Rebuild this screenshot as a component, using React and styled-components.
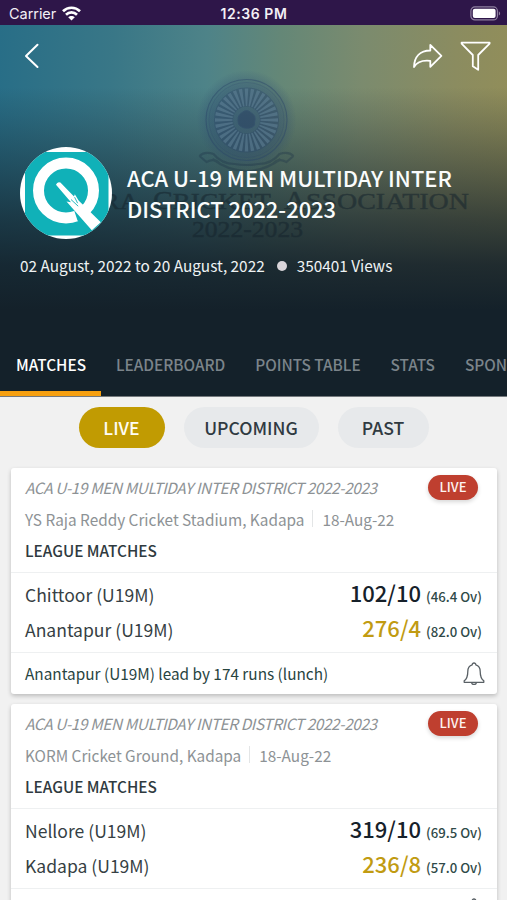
import React from "react";
import styled, { createGlobalStyle, css } from "styled-components";

const Global = createGlobalStyle`
  *, *::before, *::after { box-sizing: border-box; }
  html, body { margin: 0; padding: 0; overflow: hidden; }
  body { background: #f1f1f1; }
`;

const Screen = styled.div`
  width: 507px;
  height: 900px;
  overflow: hidden;
  display: flex;
  flex-direction: column;
  background: #f1f1f1;
  font-family: "Noto Sans CJK SC", "Noto Sans", sans-serif;
  color: #363f44;
  white-space: nowrap;
`;

const StatusBar = styled.header`
  flex: none;
  height: 25px;
  display: grid;
  grid-template-columns: 1fr auto 1fr;
  align-items: center;
  padding: 2px 6px 0 9px;
  background: #2e1649;
  color: #f3eff6;
  font-family: Inter, sans-serif;
  font-size: 14.5px;
  line-height: 20px;
`;

const Carrier = styled.div`
  display: flex;
  align-items: center;
  gap: 6px;
  letter-spacing: -0.05px;
`;

const Clock = styled.div`
  font-weight: 600;
  font-size: 14px;
  letter-spacing: 0.55px;
  transform: translateX(-1px);
`;

const BatterySlot = styled.div`
  display: flex;
  justify-content: flex-end;
`;

const Hero = styled.section`
  position: relative;
  flex: none;
  height: 372px;
  display: flex;
  flex-direction: column;
  background:
    linear-gradient(180deg, rgba(20, 33, 42, 0) 0, rgba(20, 33, 42, 0) 62px, rgba(20, 33, 42, 0.2) 102px, rgba(20, 33, 42, 0.46) 150px, rgba(20, 33, 42, 0.7) 195px, rgba(20, 33, 42, 0.9) 240px, #14212a 285px),
    linear-gradient(92deg, #286e87 0, #397787 22%, #4e8388 40%, #648777 54%, #7b8b6e 70%, #8b8c60 88%, #928e59 100%);
`;

const Watermark = styled.svg`
  position: absolute;
  left: 0;
  top: 0;
`;

const Toolbar = styled.nav`
  position: relative;
  height: 60px;
  display: flex;
  align-items: center;
  padding: 2px 16px 0 24px;
`;

const Spacer = styled.div`
  flex: 1;
`;

const IconButton = styled.button`
  display: flex;
  padding: 0;
  border: 0;
  background: none;
  margin-left: ${(p) => p.$gap || 0}px;
`;

const Identity = styled.div`
  position: relative;
  display: flex;
  align-items: center;
  gap: 15px;
  margin-top: 62px;
  padding-left: 20px;
`;

const Title = styled.h1`
  margin: 0;
  color: #fafcfc;
  font-size: 21.9px;
  line-height: 31px;
  font-weight: 500;
`;

const Meta = styled.div`
  position: relative;
  display: flex;
  align-items: center;
  margin-top: 15px;
  padding-left: 20px;
  color: #eef2f3;
  font-size: 15.35px;
  line-height: 22px;
`;

const Dot = styled.i`
  width: 10px;
  height: 10px;
  border-radius: 50%;
  margin: 2px 10px 0 12px;
  background: #d9d5da;
`;

const Tabs = styled.div`
  position: relative;
  display: flex;
  margin-top: auto;
  height: 62px;
  border-bottom: 1px solid #74797d;
`;

const Tab = styled.div`
  flex: none;
  padding: 18px 15px 0;
  font-size: 15.35px;
  line-height: 22px;
  font-weight: 500;
  height: 61px;
  color: #7b848a;
  ${(p) => p.$active && css`
    color: #fff;
    border-bottom: 5px solid #f7a010;
    padding-left: 16px;
  `}
`;

const Filters = styled.div`
  flex: none;
  display: flex;
  justify-content: center;
  gap: 19px;
  padding: 10px 0 20px;
`;

const Pill = styled.button`
  border: 0;
  padding: 0;
  height: 41px;
  width: ${(p) => p.$w}px;
  border-radius: 21px;
  font: 500 17.6px/41px "Noto Sans CJK SC", "Noto Sans", sans-serif;
  background: ${(p) => (p.$active ? "#c19b02" : "#e7e9eb")};
  color: ${(p) => (p.$active ? "#fffdf4" : "#303a41")};
`;

const List = styled.main`
  display: flex;
  flex-direction: column;
  gap: 10px;
  padding: 0 10px 0 11px;
`;

const Card = styled.article`
  flex: none;
  background: #fff;
  border-radius: 3px;
  box-shadow: 0 2px 4px rgba(0, 0, 0, 0.22);
`;

const CardHead = styled.div`
  height: 105px;
  padding: 3px 19px 0 14px;
  border-bottom: 1px solid #eef0f1;
`;

const HeadRow = styled.div`
  display: flex;
  align-items: center;
  justify-content: space-between;
  height: 32px;
`;

const Series = styled.div`
  font-size: 15.4px;
  line-height: 22px;
  letter-spacing: -0.4px;
  font-style: italic;
  color: #8d9295;
  margin-top: -1px;
`;

const Badge = styled.div`
  width: 50px;
  height: 25px;
  margin-top: 1px;
  border-radius: 13px;
  background: #bf3f2f;
  box-shadow: 0 2px 4px rgba(0, 0, 0, 0.16);
  color: #fdf3f1;
  font-size: 13.1px;
  line-height: 24px;
  font-weight: 500;
  text-align: center;
`;

const Venue = styled.div`
  display: flex;
  align-items: center;
  height: 31px;
  font-size: 15.35px;
  line-height: 22px;
  color: #8d9295;
`;

const Divider = styled.i`
  width: 1px;
  height: 17px;
  margin: 0 9px 0 8px;
  background: #e3e5e6;
`;

const Stage = styled.div`
  height: 32px;
  font-size: 15.35px;
  line-height: 32px;
  font-weight: 500;
  color: #2f3a40;
`;

const Teams = styled.div`
  height: 80px;
  padding: 2px 15px 0 14px;
  border-bottom: 1px solid #eef0f1;
`;

const TeamRow = styled.div`
  display: flex;
  align-items: baseline;
  height: 35px;
  line-height: 35px;
`;

const Team = styled.div`
  flex: 1;
  font-size: 17.55px;
  color: #363f44;
`;

const Runs = styled.div`
  font-size: 22px;
  font-weight: 500;
  color: ${(p) => (p.$gold ? "#c19b12" : "#16212a")};
`;

const Overs = styled.div`
  margin-left: 5px;
  font-size: 13.2px;
  font-weight: 500;
  color: #2f4a48;
`;

const CardFoot = styled.div`
  display: flex;
  align-items: center;
  justify-content: space-between;
  height: 41px;
  padding: 0 12px 0 14px;
  font-size: 15.35px;
  line-height: 22px;
  color: #28443f;
`;

const Note = styled.span`
  margin-top: -1px;
`;

const Wifi = () => (
  <svg width="19" height="15" viewBox="0 0 19 15" fill="none" stroke="#fff" strokeWidth="2.7">
    <path d="M1 5.2C5.7.6 13.3.6 18 5.2" />
    <path d="M4 8.7c3.1-3 7.9-3 11 0" />
    <path d="M6.2 11.3c1.8-1.8 4.8-1.8 6.6 0L9.5 14.6z" fill="#fff" stroke="none" />
  </svg>
);

const Battery = () => (
  <svg width="31" height="15" viewBox="0 0 31 15">
    <rect x=".9" y=".9" width="26.5" height="13" rx="4" fill="none" stroke="#8f80a0" strokeWidth="1.2" />
    <rect x="2.8" y="2.8" width="22.8" height="9.2" rx="2" fill="#fff" />
    <path d="M28.8 5.2c1.8.7 1.8 3.7 0 4.4z" fill="#8f80a0" />
  </svg>
);

const BackIcon = () => (
  <svg width="16" height="26" viewBox="0 0 16 26" fill="none" stroke="#fff" strokeWidth="2" strokeLinecap="round" strokeLinejoin="round">
    <path d="M13.5 1.8 2 13l11.5 11" />
  </svg>
);

const ShareIcon = () => (
  <svg width="31" height="26" viewBox="0 0 31 26" fill="none" stroke="#fff" strokeWidth="1.8" strokeLinejoin="round">
    <path d="M18.3 1.9 29.4 12.9 18.3 23.8V17.9C10.5 17 5.4 18.4 2 24.1 2.2 13.7 8.2 7.7 18.3 7.5z" />
  </svg>
);

const FilterIcon = () => (
  <svg width="31" height="31" viewBox="0 0 31 31" fill="none" stroke="#fff" strokeWidth="1.8" strokeLinejoin="round">
    <path d="M1.6 1.6h28v1L18.2 14v14.8l-5.4-3.5V14L1.6 2.6z" />
  </svg>
);

const Logo = () => (
  <svg width="92" height="92" viewBox="0 0 92 92">
    <defs>
      <clipPath id="disc"><circle cx="46" cy="46" r="46" /></clipPath>
    </defs>
    <g clipPath="url(#disc)">
      <rect width="92" height="92" fill="#fff" />
      <rect x="5" y="5" width="83.5" height="83.5" fill="#10b1b8" />
      <circle cx="46" cy="43.5" r="27.5" fill="none" stroke="#fff" strokeWidth="11" />
      <path d="M50 54 53 60 57.5 73.5 60 76 72 84z" fill="#10b1b8" />
      <path d="M36 37.8Q37.2 34.4 40.4 35.6L54 49.6 54.8 47.2 58.6 53.6 80.8 75.2 71.8 83.2 46.5 54.4 51 55.2z" fill="#fff" />
      <path d="M51 52.5 58.2 59.2M54.6 50.2l3 6" stroke="#10b1b8" strokeWidth="0.9" fill="none" />
    </g>
  </svg>
);

const Bell = () => (
  <svg width="22" height="24" viewBox="0 0 22 24" fill="none" stroke="#596065" strokeWidth="1.3" strokeLinejoin="round">
    <path d="M9.2 2.8a1.8 1.8 0 0 1 3.6 0c3.2.9 4.4 3.2 4.4 6.6 0 5 .9 7.4 3.6 9.4v1.5H1.2v-1.5c2.7-2 3.6-4.4 3.6-9.4 0-3.4 1.2-5.7 4.4-6.6z" />
    <path d="M8.6 20.5c.2 2.6 4.6 2.6 4.8 0" />
  </svg>
);

const spokes = Array.from({ length: 32 }, (_, i) => (i * 360) / 32);

const watermarkWords = [
  { first: "A", rest: "NDHRA", x: 23, width: 116 },
  { first: "C", rest: "RICKET", x: 153, width: 118 },
  { first: "A", rest: "SSOCIATION", x: 284, width: 185 },
];

const HeroWatermark = () => (
  <Watermark width="507" height="371" viewBox="0 0 507 371" aria-hidden="true">
    <defs>
      <radialGradient id="halo">
        <stop offset="0" stopColor="#2c4a72" stopOpacity="0.5" />
        <stop offset="0.7" stopColor="#2c4a72" stopOpacity="0.38" />
        <stop offset="1" stopColor="#2c4a72" stopOpacity="0" />
      </radialGradient>
    </defs>
    <circle cx="246.5" cy="95" r="50" fill="url(#halo)" />
    <g transform="translate(246.5 95)" fill="none" stroke="#2a4468">
      <circle r="40.5" strokeWidth="1.2" opacity="0.45" />
      <circle r="37.5" strokeWidth="0.7" opacity="0.3" />
      <circle r="23" strokeWidth="19" opacity="0.35" />
      {spokes.map((a) => (
        <path key={a} transform={`rotate(${a})`} d="M-.7-14-1.8-31.5H1.8L.7-14z" fill="#7093a8" fillOpacity="0.4" stroke="none" />
      ))}
      <path d="M-5-7Q0-12 5-7 10-4 8 2 9 7 3 8-5 9-8 4-10-4-5-7z" fill="#263d60" opacity="0.45" />
      <g stroke="#1d3348" opacity="0.35">
        <path d="M-47 36Q-42 31-33 34-25 44-12 44 0 46 12 44 25 44 33 34 42 31 47 36M-47 36-40 42Q-32 38-27 43M47 36 40 42Q32 38 27 43" strokeWidth="2.2" />
        <path d="M-34 39Q-18 51 0 51T34 39" strokeWidth="2.2" />
      </g>
    </g>
    <g fill="#15242d" stroke="#15242d" strokeWidth="0.4" opacity="0.55" fontFamily="Liberation Serif, serif">
      {watermarkWords.map((w) => (
        <text key={w.rest} x={w.x} y="183.5" fontSize="23.5" textLength={w.width} lengthAdjust="spacingAndGlyphs">
          <tspan fontSize="25.5">{w.first}</tspan>{w.rest}
        </text>
      ))}
      <text x="192" y="212" fontSize="23.5" textLength="111" lengthAdjust="spacingAndGlyphs">2022-2023</text>
    </g>
  </Watermark>
);

const tabs = [
  { label: "MATCHES", active: true },
  { label: "LEADERBOARD" },
  { label: "POINTS TABLE" },
  { label: "STATS" },
  { label: "SPONSORS" },
];

const matches = [
  {
    venue: "YS Raja Reddy Cricket Stadium, Kadapa",
    teams: [
      { name: "Chittoor (U19M)", runs: "102/10", overs: "(46.4 Ov)" },
      { name: "Anantapur (U19M)", runs: "276/4", overs: "(82.0 Ov)", gold: true },
    ],
    note: "Anantapur (U19M) lead by 174 runs (lunch)",
  },
  {
    venue: "KORM Cricket Ground, Kadapa",
    teams: [
      { name: "Nellore (U19M)", runs: "319/10", overs: "(69.5 Ov)" },
      { name: "Kadapa (U19M)", runs: "236/8", overs: "(57.0 Ov)", gold: true },
    ],
    note: "",
  },
];

const MatchCard = ({ match }) => (
  <Card>
    <CardHead>
      <HeadRow>
        <Series>ACA U-19 MEN MULTIDAY INTER DISTRICT 2022-2023</Series>
        <Badge>LIVE</Badge>
      </HeadRow>
      <Venue>{match.venue}<Divider />18-Aug-22</Venue>
      <Stage>LEAGUE MATCHES</Stage>
    </CardHead>
    <Teams>
      {match.teams.map((t) => (
        <TeamRow key={t.name}>
          <Team>{t.name}</Team>
          <Runs $gold={t.gold}>{t.runs}</Runs>
          <Overs>{t.overs}</Overs>
        </TeamRow>
      ))}
    </Teams>
    <CardFoot><Note>{match.note}</Note><Bell /></CardFoot>
  </Card>
);

export default function App() {
  return (
    <Screen>
      <Global />
      <StatusBar>
        <Carrier>Carrier<Wifi /></Carrier>
        <Clock>12:36 PM</Clock>
        <BatterySlot><Battery /></BatterySlot>
      </StatusBar>
      <Hero>
        <HeroWatermark />
        <Toolbar>
          <IconButton aria-label="Back"><BackIcon /></IconButton>
          <Spacer />
          <IconButton aria-label="Share"><ShareIcon /></IconButton>
          <IconButton aria-label="Filter" $gap={17}><FilterIcon /></IconButton>
        </Toolbar>
        <Identity>
          <Logo />
          <Title>
            ACA U-19 MEN MULTIDAY INTER<br />
            DISTRICT 2022-2023
          </Title>
        </Identity>
        <Meta>
          <span>02 August, 2022 to 20 August, 2022</span>
          <Dot />
          <span>350401 Views</span>
        </Meta>
        <Tabs>
          {tabs.map((t) => <Tab key={t.label} $active={t.active}>{t.label}</Tab>)}
        </Tabs>
      </Hero>
      <Filters>
        <Pill $w={86} $active>LIVE</Pill>
        <Pill $w={135}>UPCOMING</Pill>
        <Pill $w={91}>PAST</Pill>
      </Filters>
      <List>
        {matches.map((m) => <MatchCard key={m.venue} match={m} />)}
      </List>
    </Screen>
  );
}
